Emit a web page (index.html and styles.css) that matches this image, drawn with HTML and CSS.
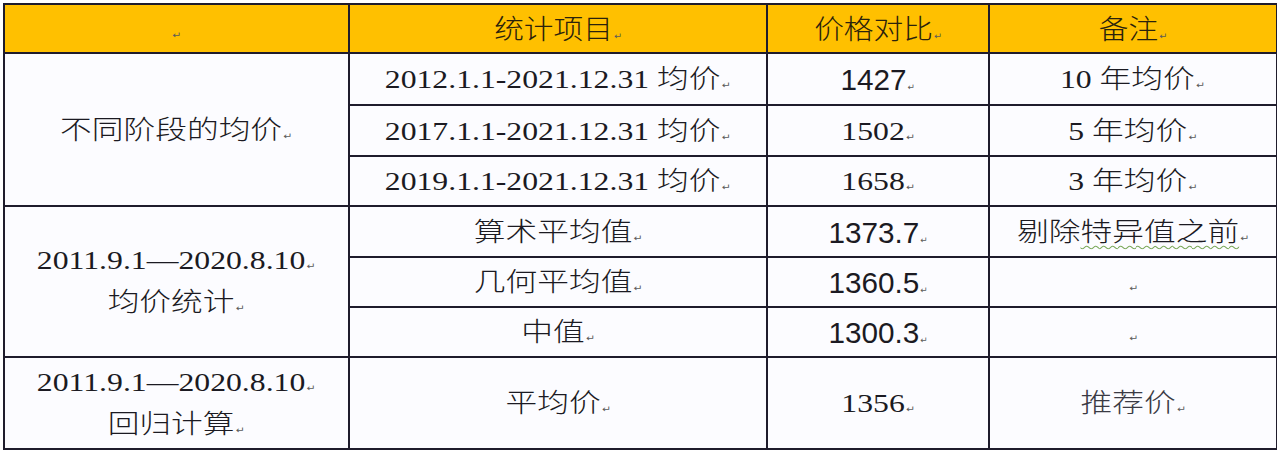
FILE: index.html
```html
<!DOCTYPE html>
<html lang="zh-CN">
<head>
<meta charset="utf-8">
<title>价格对比</title>
<link rel="stylesheet" href="styles.css">
</head>
<body>
<table class="tbl">
  <colgroup>
    <col class="c1"><col class="c2"><col class="c3"><col class="c4">
  </colgroup>
  <thead>
    <tr class="rh">
      <th><span class="t"><span class="pm">↵</span></span></th>
      <th><span class="t hd">统计项目<span class="pm">↵</span></span></th>
      <th><span class="t hd">价格对比<span class="pm">↵</span></span></th>
      <th><span class="t hd">备注<span class="pm">↵</span></span></th>
    </tr>
  </thead>
  <tbody>
    <tr class="r1">
      <td rowspan="3"><span class="t">不同阶段的均价<span class="pm">↵</span></span></td>
      <td><span class="t">2012.1.1-2021.12.31 均价<span class="pm">↵</span></span></td>
      <td><span class="t sans">1427<span class="pm">↵</span></span></td>
      <td><span class="t">10 年均价<span class="pm">↵</span></span></td>
    </tr>
    <tr class="r2">
      <td><span class="t">2017.1.1-2021.12.31 均价<span class="pm">↵</span></span></td>
      <td><span class="t">1502<span class="pm">↵</span></span></td>
      <td><span class="t">5 年均价<span class="pm">↵</span></span></td>
    </tr>
    <tr class="r3">
      <td><span class="t">2019.1.1-2021.12.31 均价<span class="pm">↵</span></span></td>
      <td><span class="t">1658<span class="pm">↵</span></span></td>
      <td><span class="t">3 年均价<span class="pm">↵</span></span></td>
    </tr>
    <tr class="r4">
      <td rowspan="3"><span class="t two"><span class="ln">2011.9.1—2020.8.10<span class="pm">↵</span></span><span class="ln">均价统计<span class="pm">↵</span></span></span></td>
      <td><span class="t">算术平均值<span class="pm">↵</span></span></td>
      <td><span class="t sans">1373.7<span class="pm">↵</span></span></td>
      <td><span class="t">剔除<span class="wavy">特异值之前</span><span class="pm">↵</span></span></td>
    </tr>
    <tr class="r5">
      <td><span class="t">几何平均值<span class="pm">↵</span></span></td>
      <td><span class="t sans">1360.5<span class="pm">↵</span></span></td>
      <td><span class="t"><span class="pm">↵</span></span></td>
    </tr>
    <tr class="r6">
      <td><span class="t">中值<span class="pm">↵</span></span></td>
      <td><span class="t sans">1300.3<span class="pm">↵</span></span></td>
      <td><span class="t"><span class="pm">↵</span></span></td>
    </tr>
    <tr class="r7">
      <td><span class="t two"><span class="ln">2011.9.1—2020.8.10<span class="pm">↵</span></span><span class="ln">回归计算<span class="pm">↵</span></span></span></td>
      <td><span class="t">平均价<span class="pm">↵</span></span></td>
      <td><span class="t">1356<span class="pm">↵</span></span></td>
      <td><span class="t faded">推荐价<span class="pm">↵</span></span></td>
    </tr>
  </tbody>
</table>
</body>
</html>
```

FILE: styles.css
```css
html, body {
  background: #ffffff;
}
body {
  margin: 3px;
}
.tbl {
  border-collapse: collapse;
  table-layout: fixed;
  width: 1273px;
  background: #fcfcff;
  font-family: "Liberation Serif", "Noto Sans CJK SC", serif;
  font-size: 26px;
  font-weight: 300;
  color: #1b1a22;
}
.c1 { width: 345px; }
.c2 { width: 418px; }
.c3 { width: 222px; }
.c4 { width: 288px; }

.tbl th,
.tbl td {
  border: 2px solid #1f1c2c;
  padding: 0;
  text-align: center;
  vertical-align: middle;
  font-weight: 300;
  line-height: 28px;
}
.tbl thead th {
  background: #ffc000;
  color: #2a220c;
}
.rh { height: 49px; }
.r1 { height: 52px; }
.r2 { height: 51px; }
.r3 { height: 50px; }
.r4 { height: 51px; }
.r5 { height: 50px; }
.r6 { height: 50px; }
.r7 { height: 92px; }

.t {
  display: inline-block;
  transform: scaleX(1.22);
  white-space: nowrap;
  vertical-align: middle;
}
.hd {
  font-size: 27px;
  transform: scaleX(1.1);
}
.two {
  display: inline-flex;
  flex-direction: column;
  align-items: center;
  gap: 13px;
}
.ln {
  display: block;
  line-height: 29px;
}
.sans {
  font-family: "Liberation Sans", "Noto Sans CJK SC", sans-serif;
  font-size: 30px;
  font-weight: 400;
  transform: scaleX(0.99);
}
.pm {
  font-family: "DejaVu Sans", sans-serif;
  font-size: 9px;
  font-weight: 400;
  line-height: 0;
  color: #5a5a5a;
  margin-left: 1px;
  vertical-align: baseline;
}
.wavy {
  text-decoration: underline wavy #7aa85a;
  text-decoration-thickness: 1px;
  text-underline-offset: 4px;
}
.faded {
  color: #3a3a44;
}
```
